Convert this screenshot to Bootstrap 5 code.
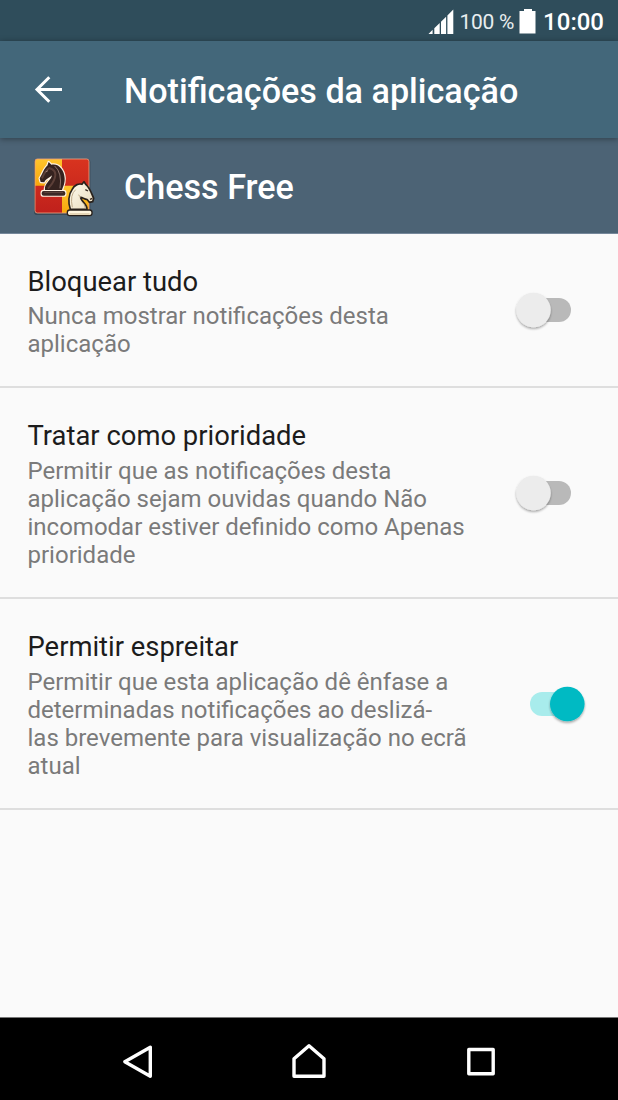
<!DOCTYPE html>
<html lang="pt">
<head>
<meta charset="utf-8">
<meta name="viewport" content="width=device-width, initial-scale=1">
<title>Notificações da aplicação</title>
<link href="https://cdn.jsdelivr.net/npm/bootstrap@5.3.0/dist/css/bootstrap.min.css" rel="stylesheet">
<style>
  body { font-family: Roboto, "Noto Sans", sans-serif; background: #fafafa; height: 1100px; overflow: hidden; }
  svg { display: block; flex: none; }
  .status { height: 41px; background: #2f4d5b; padding-right: 14px; }
  .status-pct { font-size: 21px; line-height: 40px; color: #e8edef; margin: 2px 5px 0 6px; letter-spacing: -.3px; }
  .status-time { font-size: 24px; line-height: 40px; font-weight: 500; margin: 2px 0 0 7px; }
  .app-toolbar { height: 97px; background: #43677a; padding-left: 33px; box-shadow: 0 1px 6px rgba(0,0,0,.38); z-index: 1; }
  .heading { font-size: 34.15px; line-height: 40px; font-weight: 500; }
  .app-toolbar .heading { margin: 2px 0 0 59px; }
  .app-band { height: 96px; background: #4c6375; padding-left: 24px; border-bottom: 1px solid #75879a; }
  .app-band > svg { margin-top: 4px; }
  .app-band .heading { margin: 3px 0 0 20px; }
  .pref { border-bottom: 2px solid #dedede; padding: 32px 28px 0 27.5px; height: 211px; }
  .pref-short { height: 154px; }
  .pref > svg { align-self: center; margin-top: -31px; }
  .pref-short > svg { margin-top: -32px; }
  .pref-title { font-size: 27.4px; line-height: 32px; color: #1c1c1c; margin-bottom: 5px; }
  .pref-short .pref-title { margin-bottom: 4px; }
  .pref-text { font-size: 24px; line-height: 28px; color: #7a7a7a; }
  .nav-keys { height: 83px; background: #000; border-top: 1px solid #777; }
</style>
</head>
<body class="d-flex flex-column">
  <header class="status d-flex align-items-center justify-content-end text-white flex-shrink-0">
    <svg width="26" height="26" viewBox="0 0 26 26" fill="#fff"><path d="M.5 26 4.6 21.8V26zM6.3 20.2 11.7 15V26H6.3zM13 13.7 18.1 8.8V26H13zM19.4 7.5 25.3 1.5V26H19.4z"/></svg>
    <span class="status-pct">100 %</span>
    <svg width="17" height="26" viewBox="0 0 17 26"><path d="M5 1h8v2h3.5v22.5H.5V3H5z" fill="#fff"/></svg>
    <span class="status-time">10:00</span>
  </header>
  <nav class="app-toolbar d-flex align-items-center text-white position-relative flex-shrink-0">
    <svg width="32" height="32" viewBox="0 0.5 32 32" fill="none" stroke="#fff" stroke-width="3"><path d="M29 16H4M16.3 3.7 4 16 16.3 28.3"/></svg>
    <h1 class="heading">Notificações da aplicação</h1>
  </nav>
  <section class="app-band d-flex align-items-center text-white flex-shrink-0">
    <svg width="80" height="80" viewBox="0 0 240 240">
      <defs>
        <linearGradient id="gold" x2="0" y2="1"><stop stop-color="#ffc52d"/><stop offset="1" stop-color="#f8a70c"/></linearGradient>
        <linearGradient id="red" x2="0" y2="1"><stop stop-color="#d9341f"/><stop offset="1" stop-color="#bf201c"/></linearGradient>
        <linearGradient id="cream" x2="1" y2="1"><stop stop-color="#fffdf0"/><stop offset="1" stop-color="#e9dabb"/></linearGradient>
        <clipPath id="tile"><rect x="33" y="33" width="162" height="162" rx="7"/></clipPath>
      </defs>
      <rect x="30" y="33" width="169" height="168" rx="10" fill="#263540" opacity=".55"/>
      <g clip-path="url(#tile)">
        <path fill="url(#red)" d="M30 30h170v170H30z"/>
        <path fill="url(#gold)" d="M30 30h84v83H30z"/>
        <path fill="url(#gold)" d="M114 113h84v85h-84z"/>
      </g>
      <rect x="33" y="33" width="162" height="162" rx="7" fill="none" stroke="#eda180" stroke-width="2.5"/>
      <g stroke="#fff3e4" stroke-width="7" stroke-linejoin="round" fill="#fff3e4">
        <path d="M63 126C60 106 82 97 84 82 76 91 65 92 61 103L50 102 47 91C56 76 60 61 70 53L74 42 82 50C104 45 121 66 122 91 123 108 116 118 114 126z"/>
        <rect x="53" y="129" width="71" height="14" rx="6"/>
      </g>
      <path fill="#35221f" d="M63 126C60 106 82 97 84 82 76 91 65 92 61 103L50 102 47 91C56 76 60 61 70 53L74 42 82 50C104 45 121 66 122 91 123 108 116 118 114 126z"/>
      <path d="M54 91q10-24 22-31M75 60q25 6 17 31-4 14-20 31" fill="none" stroke="#5c3f38" stroke-width="6"/>
      <path d="M92 54q23 20 16 67M65 72l7-4" fill="none" stroke="#c9aaa0" stroke-width="1.8"/>
      <rect x="53" y="129" width="71" height="14" rx="6" fill="#3c2825"/>
      <path d="M61 133h56" stroke="#795b50" stroke-width="2"/>
      <path d="M139 184C132 164 133 139 144 125 152 109 166 106 174 109L180 101 186 110C198 120 203 138 209 151L206 161 196 163 190 155C180 154 177 149 170 148 169 158 191 169 189 184z" fill="url(#cream)" stroke="#29211b" stroke-width="5" stroke-linejoin="round"/>
      <path d="M145 178q-8-38 10-53M170 148q-4-2-6-8M174 162q10 7 10 19" fill="none" stroke="#b59c78" stroke-width="2.5"/>
      <path d="m184 125 8 4M198 154l7-3" stroke="#34251d" stroke-width="4"/>
      <rect x="130" y="186" width="74" height="17" rx="7" fill="#fff6df" stroke="#29211b" stroke-width="4"/>
      <path d="M137 198h60" stroke="#cdb78f" stroke-width="3"/>
    </svg>
    <h2 class="heading">Chess Free</h2>
  </section>
  <main class="flex-grow-1">
    <div class="pref pref-short d-flex align-items-start justify-content-between">
      <div>
        <div class="pref-title">Bloquear tudo</div>
        <div class="pref-text">Nunca mostrar notificações desta<br>aplicação</div>
      </div>
      <svg width="80" height="50" viewBox="0 0 80 50" role="switch" aria-checked="false"><use href="#toggle-off"/></svg>
    </div>
    <div class="pref d-flex align-items-start justify-content-between">
      <div>
        <div class="pref-title">Tratar como prioridade</div>
        <div class="pref-text">Permitir que as notificações desta<br>aplicação sejam ouvidas quando Não<br>incomodar estiver definido como Apenas<br>prioridade</div>
      </div>
      <svg width="80" height="50" viewBox="0 0 80 50" role="switch" aria-checked="false">
        <defs>
          <filter id="lift" x="-30%" y="-30%" width="160%" height="160%"><feDropShadow dx="0" dy="1.6" stdDeviation="1.3" flood-opacity=".35"/></filter>
          <g id="toggle-off">
            <rect x="12" y="13" width="49" height="24" rx="12" fill="#b9b9b9"/>
            <circle cx="23.5" cy="25" r="17.3" fill="#ececec" filter="url(#lift)"/>
          </g>
        </defs>
        <use href="#toggle-off"/>
      </svg>
    </div>
    <div class="pref d-flex align-items-start justify-content-between">
      <div>
        <div class="pref-title">Permitir espreitar</div>
        <div class="pref-text">Permitir que esta aplicação dê ênfase a<br>determinadas notificações ao deslizá-<br>las brevemente para visualização no ecrã<br>atual</div>
      </div>
      <svg width="80" height="50" viewBox="0 0 80 50" role="switch" aria-checked="true">
        <rect x="20" y="13" width="49" height="24" rx="12" fill="#a8ecec"/>
        <circle cx="57.3" cy="25" r="17.3" fill="#02bac3" filter="url(#lift)"/>
      </svg>
    </div>
  </main>
  <footer class="nav-keys d-flex align-items-center justify-content-center flex-shrink-0">
    <svg width="618" height="82" viewBox="0 1018 618 82" fill="none" stroke="#fff" stroke-width="3.4" stroke-linejoin="round">
      <path d="M150.3 1047.2V1076.2L124.8 1061.7z"/>
      <path d="M309 1045.7 324 1058.8V1076.2H294V1058.8z"/>
      <path d="M468.8 1049.5H493.2V1073.7H468.8z"/>
    </svg>
  </footer>
<script src="https://cdn.jsdelivr.net/npm/bootstrap@5.3.0/dist/js/bootstrap.bundle.min.js"></script>
</body>
</html>
